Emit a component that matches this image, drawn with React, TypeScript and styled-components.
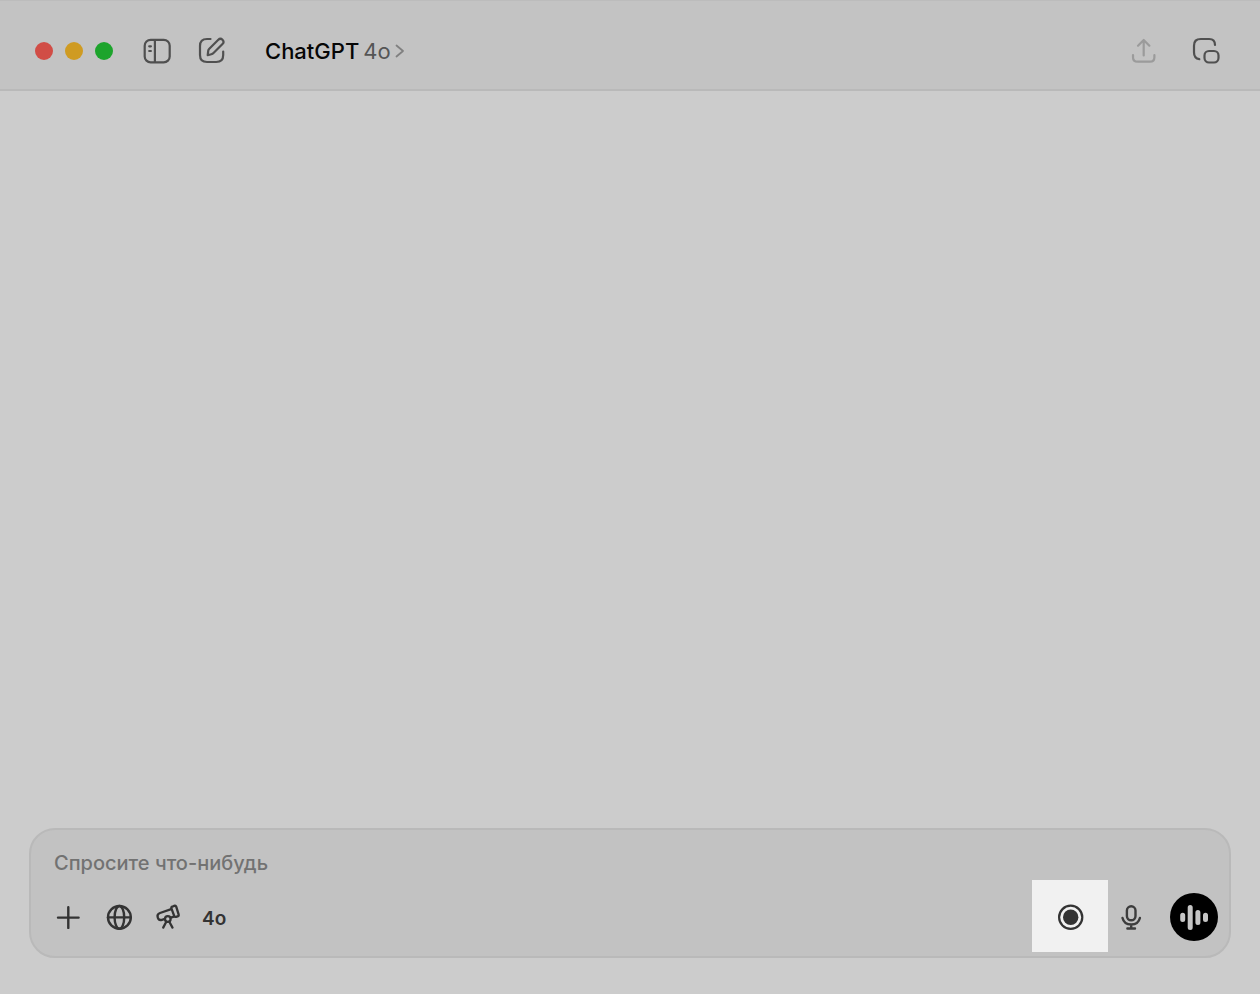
import React from "react";
import styled, { createGlobalStyle } from "styled-components";

const GlobalStyle = createGlobalStyle`
  *, *::before, *::after { box-sizing: border-box; }
  body {
    margin: 0;
    background: #cccccc;
    font-family: Inter, "Liberation Sans", sans-serif;
  }
`;

const Window = styled.div`
  display: flex;
  flex-direction: column;
  min-height: 100vh;
`;

const TitleBar = styled.header`
  display: flex;
  align-items: center;
  padding: 34px 39px 22px 35px;
  background: #c3c3c3;
  border-top: 1px solid #bcbcbc;
  border-bottom: 2px solid #b9b9b9;
`;

const TrafficLights = styled.div`
  display: flex;
  gap: 12px;
  margin-right: 29px;
`;

const Light = styled.button<{ $color: string }>`
  width: 18px;
  height: 18px;
  padding: 0;
  border: 0;
  border-radius: 50%;
  background: ${(p) => p.$color};
`;

const IconButton = styled.button<{ $width?: number; $color?: string }>`
  display: flex;
  align-items: center;
  justify-content: center;
  width: ${(p) => p.$width ?? 30}px;
  height: 30px;
  padding: 0;
  border: 0;
  background: none;
  color: ${(p) => p.$color ?? "#333333"};
`;

const TitleActions = styled.div<{ $gap: number }>`
  display: flex;
  gap: ${(p) => p.$gap}px;
`;

const ModelButton = styled.button`
  display: flex;
  align-items: center;
  margin: 0 auto 0 38px;
  padding: 0;
  border: 0;
  background: none;
  color: #555555;
  font: 400 22px/32px Inter, "Liberation Sans", sans-serif;
`;

const ModelName = styled.span`
  margin-right: 4px;
  color: #060606;
  font-weight: 500;
`;

const Chevron = styled.svg`
  margin-left: 4px;
`;

const Conversation = styled.main`
  flex: 1;
`;

const Footer = styled.footer`
  padding: 0 29px 36px;
`;

const Composer = styled.form`
  padding: 14px 0 2px;
  border: 2px solid #b9b9b9;
  border-radius: 26px;
  background: #c2c2c2;
`;

const Prompt = styled.input`
  display: block;
  width: 100%;
  height: 36px;
  padding: 2px 23px 0;
  border: 0;
  outline: 0;
  background: none;
  color: #222222;
  font: 500 20px/32px Inter, "Liberation Sans", sans-serif;

  &::placeholder {
    color: #727272;
    opacity: 1;
  }
`;

const Toolbar = styled.div`
  display: flex;
  align-items: center;
  height: 74px;
  padding: 0 11px 0 22px;
`;

const Tools = styled.div`
  display: flex;
  align-items: center;
  gap: 21px;
  margin-right: auto;
`;

const ModelTool = styled.button`
  padding: 4px 0 0;
  border: 0;
  background: none;
  color: #333333;
  font: 600 19px/30px Inter, "Liberation Sans", sans-serif;
`;

const RecordButton = styled.button`
  display: flex;
  align-items: center;
  align-self: flex-start;
  justify-content: center;
  width: 76px;
  height: 72px;
  padding: 0;
  border: 0;
  background: #f1f1f1;
  color: #333333;
`;

const VoiceButton = styled.button`
  display: flex;
  align-items: center;
  justify-content: center;
  width: 48px;
  height: 48px;
  margin-left: 16px;
  padding: 0;
  border: 0;
  border-radius: 50%;
  background: #000000;
  color: #c6c6c6;
`;

type IconProps = { width?: number; height?: number; stroke?: number; children: React.ReactNode };

function Icon({ width = 28, height = 28, stroke = 2.2, children }: IconProps) {
  return (
    <svg
      width={width}
      height={height}
      viewBox={`0 0 ${width} ${height}`}
      fill="none"
      stroke="currentColor"
      strokeWidth={stroke}
      strokeLinecap="round"
      strokeLinejoin="round"
      aria-hidden="true"
    >
      {children}
    </svg>
  );
}

export default function App() {
  return (
    <Window>
      <GlobalStyle />
      <TitleBar>
        <TrafficLights>
          <Light $color="#d14d46" aria-label="Закрыть" />
          <Light $color="#cf9b22" aria-label="Свернуть" />
          <Light $color="#1da42c" aria-label="Развернуть" />
        </TrafficLights>
        <TitleActions $gap={25}>
          <IconButton $color="#505050" aria-label="Боковая панель">
            <Icon>
              <rect x="1.7" y="2.8" width="25" height="22.6" rx="6" />
              <path d="M11.9 3v22" />
              <path d="M6.2 9.3h1.700M6.200 14h1.700" />
            </Icon>
          </IconButton>
          <IconButton $color="#505050" aria-label="Новый чат">
            <Icon>
              <path d="M12.5 2H9C4.2 2 2 4.2 2 9v9c0 4.8 2.2 7 7 7h9.2c4.8 0 7-2.2 7-7v-3.5" />
              <path d="M9.7 18.2l.5-4.2c.1-.9.5-1.6 1.1-2.2l9-9a2.9 2.9 0 0 1 4.2 4.2l-9 9c-.6.6-1.4 1-2.2 1.2z" />
            </Icon>
          </IconButton>
        </TitleActions>
        <ModelButton>
          <ModelName>ChatGPT</ModelName>
          4o
          <Chevron width="10" height="14" viewBox="0 0 10 14" fill="none" stroke="#808080" strokeWidth="1.8" strokeLinecap="round" strokeLinejoin="round" aria-hidden="true">
            <path d="M1.500 1.500l6.500 5.500-6.500 5.500" />
          </Chevron>
        </ModelButton>
        <TitleActions $gap={32}>
          <IconButton $color="#9b9b9b" aria-label="Поделиться">
            <Icon width={26} height={26}>
              <path d="M2 17v2.2c0 3 1.6 4.500 4.500 4.500h12.400c2.900 0 4.500-1.500 4.500-4.500V17" />
              <path d="M12.700 17.500V2M7 7.700L12.700 2l5.700 5.700" />
            </Icon>
          </IconButton>
          <IconButton $color="#505050" aria-label="Отдельное окно">
            <Icon>
              <path d="M23 8C23 4 21.200 2 17.200 2H8.800C4 2 2 4 2 8.800v6.400c0 4 1.600 6.400 5.300 7" />
              <rect x="12.500" y="14" width="14" height="11.500" rx="4.500" />
            </Icon>
          </IconButton>
        </TitleActions>
      </TitleBar>

      <Conversation />

      <Footer>
        <Composer onSubmit={(e) => e.preventDefault()}>
          <Prompt type="text" placeholder="Спросите что-нибудь" aria-label="Спросите что-нибудь" />
          <Toolbar>
            <Tools>
              <IconButton type="button" aria-label="Добавить">
                <Icon stroke={2.4}>
                  <path d="M14.3 4.3v20.600M4 14.600h20.600" />
                </Icon>
              </IconButton>
              <IconButton type="button" aria-label="Поиск в сети">
                <Icon stroke={2.4}>
                  <circle cx="14.400" cy="14.400" r="11.400" />
                  <ellipse cx="14.400" cy="14.400" rx="4.800" ry="11.400" />
                  <path d="M3 14.400h22.800" />
                </Icon>
              </IconButton>
              <IconButton type="button" $width={26} aria-label="Глубокое исследование">
                <Icon width={26} height={28} stroke={2.3}>
                  <path d="M17.200 3.700l2-.8c1-.4 1.800 0 2.100 1l2.300 7.400c.3 1-.1 1.700-1 2l-1.500.5c-.9.3-1.600 0-1.900-.9l-2.700-7.200c-.4-.9-.1-1.700.7-2z" />
                  <path d="M16.200 6.200L5 10c-2 .7-2.900 2.200-2.300 4.100l.2.800c.6 1.800 2.100 2.500 4 1.900l3-.9M15.800 14.600l3-.9" />
                  <circle cx="12.800" cy="16" r="2.800" />
                  <path d="M11.300 18.800L8.200 24.600M14.300 18.800l3.200 5.800" />
                </Icon>
              </IconButton>
              <ModelTool type="button">4o</ModelTool>
            </Tools>
            <RecordButton type="button" aria-label="Запись">
              <Icon>
                <circle cx="14.700" cy="15.300" r="11.600" />
                <circle cx="14.700" cy="15.300" r="7.700" fill="currentColor" stroke="none" />
              </Icon>
            </RecordButton>
            <IconButton type="button" $width={46} $color="#3c3c3c" aria-label="Диктовка">
              <Icon width={24} stroke={2.4}>
                <rect x="7.900" y="3.300" width="8.600" height="14" rx="4.300" />
                <path d="M3.500 15c1 4.200 4.200 6.500 8.700 6.500s7.700-2.300 8.700-6.500M12.200 21.500v4M8.400 25.500h7.600" />
              </Icon>
            </IconButton>
            <VoiceButton type="button" aria-label="Голосовой режим">
              <Icon width={32} height={28} stroke={5}>
                <path d="M4.700 12.200v4.400M12.200 4.400v20M19.900 9.400v10M27.500 12.200v4.400" />
              </Icon>
            </VoiceButton>
          </Toolbar>
        </Composer>
      </Footer>
    </Window>
  );
}
